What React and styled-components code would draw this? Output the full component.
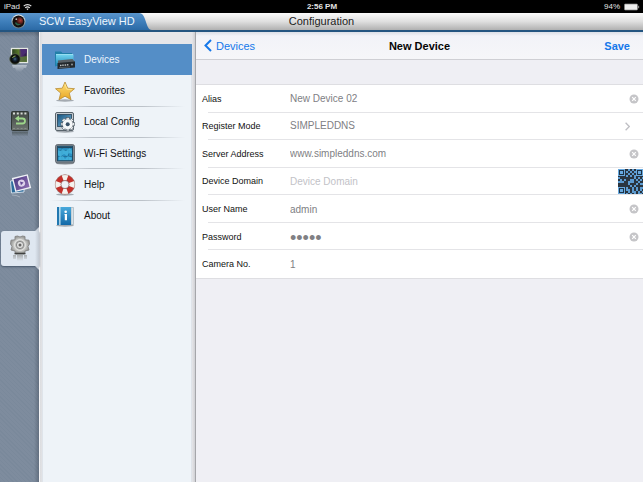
import React, { useState } from "react";
import styled, { createGlobalStyle, css } from "styled-components";

const GlobalStyle = createGlobalStyle`
  * { box-sizing: border-box; }
  body { margin: 0; }
  body, button, input { font-family: "Liberation Sans", Arial, sans-serif; }
  button { border: 0; padding: 0; background: none; color: inherit; cursor: pointer; }
  svg { display: block; flex: none; }
`;

const Screen = styled.div`
  display: flex;
  flex-direction: column;
  min-height: 100vh;
  background: #efeff4;
`;

const StatusBar = styled.div`
  display: grid;
  grid-template-columns: 1fr auto 1fr;
  align-items: center;
  height: 13px;
  padding: 0 3px 0 4px;
  background: #000;
  color: #e4e4e4;
  font-size: 8px;
  line-height: 12px;
`;

const StatusGroup = styled.div`
  display: flex;
  align-items: center;
  gap: 3px;
  justify-content: ${(p) => (p.$end ? "flex-end" : "flex-start")};
`;

const Clock = styled.time`
  font-weight: bold;
`;

const Header = styled.header`
  display: grid;
  grid-template-columns: 152px 1fr;
  height: 19px;
  border-bottom: 2px solid #245580;
  background: linear-gradient(#fbfbfb, #dfdfdf 50%, #b0b0b0);
  position: relative;
`;

const Brand = styled.div`
  display: flex;
  align-items: center;
  gap: 13px;
  padding: 0 0 0 11px;
  color: #eef6fd;
  font-size: 11px;
  line-height: 17px;
  white-space: nowrap;
  background: linear-gradient(#5994cb, #3f7fbb 50%, #2b6aa6);
  clip-path: path("M0 0 H139 C147 0 145 17 152 17 V19 H0 Z");
`;

const ScreenTitle = styled.div`
  position: absolute;
  inset: 0;
  text-align: center;
  font-size: 11px;
  line-height: 17px;
  color: #222;
`;

const Body = styled.div`
  display: flex;
  flex: 1;
`;

const Rail = styled.nav`
  display: flex;
  flex-direction: column;
  gap: 28px;
  width: 39px;
  flex: none;
  padding: 10px 0 0 1px;
  background:
    linear-gradient(90deg, transparent 34px, rgba(50, 60, 75, 0.35)),
    linear-gradient(rgba(40, 50, 65, 0.3), transparent 5px),
    repeating-linear-gradient(45deg, #7a899b 0 1px, #7e8c9e 1px 3px);
`;

const RailButton = styled.button`
  display: flex;
  align-items: center;
  justify-content: center;
  height: 35px;
  position: relative;
  ${(p) =>
    p.$active &&
    css`
      border-radius: 3px 0 0 3px;
      background: linear-gradient(90deg, #dfe7f1 34px, #c3cad4);
      box-shadow: 0 1px 2px #46566b;
      &::before,
      &::after {
        content: "";
        position: absolute;
        right: 0;
        width: 4px;
        height: 4px;
        background: #c9d0da;
      }
      &::before { top: -4px; clip-path: polygon(100% 0, 100% 100%, 0 100%); }
      &::after { bottom: -4px; clip-path: polygon(0 0, 100% 0, 100% 100%); }
    `}
`;

const Sidebar = styled.aside`
  width: 157px;
  flex: none;
  display: flex;
  padding: 12px 3px 0 2px;
  border-left: 1px solid #f5f5f7;
  border-right: 1px solid #a5a6aa;
  background: linear-gradient(90deg, #dbdcdf, #e6e6e9 3px, #e6e6e9 152px, #cfd0d4);
`;

const MenuPane = styled.nav`
  flex: 1;
  border: 1px solid #dfe4ea;
  border-width: 0 1px;
  background: #eef3f8;
`;

const Menu = styled.ul`
  display: grid;
  grid-auto-rows: 1fr;
  min-height: 188px;
  margin: 0 -1px;
  padding: 0;
  list-style: none;
`;

const MenuItem = styled.li`
  display: flex;
  background: linear-gradient(90deg, transparent 8px, #bcc2c9 50px, #bcc2c9 100px, transparent 143px) bottom / 100% 1px no-repeat;
  &:last-child { background: none; }
`;

const MenuButton = styled.button`
  display: flex;
  align-items: center;
  gap: 8px;
  width: 100%;
  min-height: 31px;
  padding: 0 12px;
  text-align: left;
  font-size: 10px;
  line-height: 12px;
  color: ${(p) => (p.$active ? "#eff6fd" : "#101214")};
  background: ${(p) => (p.$active ? "#548ec7" : "transparent")};
`;

const Panel = styled.main`
  flex: 1;
  min-width: 0;
`;

const NavBar = styled.div`
  display: grid;
  grid-template-columns: 1fr auto 1fr;
  align-items: center;
  height: 28px;
  border-bottom: 1px solid #cfcfd4;
  background: linear-gradient(#dcdfe6, #f2f3f8 4px, #f6f6f9);
`;

const PanelTitle = styled.h1`
  margin: 0;
  font-size: 11px;
  line-height: 14px;
  color: #050505;
`;

const NavButton = styled.button`
  display: flex;
  align-items: center;
  gap: 4px;
  padding: 0 13px 0 8px;
  justify-self: ${(p) => (p.$end ? "end" : "start")};
  font-size: 11px;
  line-height: 14px;
  font-weight: ${(p) => (p.$end ? "bold" : "normal")};
  color: #1578ea;
`;

const Form = styled.form`
  display: grid;
  grid-auto-rows: 1fr;
  min-height: 195px;
  margin-top: 24px;
  border: 1px solid #dedee2;
  border-width: 1px 0;
  background: #fff;
`;

const Row = styled.div`
  display: flex;
  align-items: center;
  padding: 0 4px 0 6px;
  background: linear-gradient(#e4e4e7, #e4e4e7) 12px bottom / 100% 1px no-repeat;
  ${(p) => p.$flush && css`padding-right: 0;`}
  &:last-child { background: none; }
`;

const Label = styled.label`
  width: 88px;
  flex: none;
  font-size: 9px;
  line-height: 12px;
  color: #111;
`;

const fieldText = css`
  flex: 1;
  min-width: 0;
  padding: 0;
  border: 0;
  outline: 0;
  background: none;
  color: #808084;
  font-size: 10px;
  line-height: 14px;
  height: 20px;
`;

const Field = styled.input`
  ${fieldText}
  &::placeholder { color: #c2c2c7; opacity: 1; }
  &[type="password"] { height: 24px; padding-top: 3px; font-size: 18px; }
`;

const PickerButton = styled.button`
  ${fieldText}
  display: flex;
  align-items: center;
  justify-content: space-between;
  padding-right: 9px;
`;

const IconButton = styled.button`
  display: block;
  flex: none;
`;

const WifiIcon = () => (
  <svg width="9" height="8" viewBox="0 0 9 8" fill="none" stroke="#e4e4e4" strokeWidth="1.2">
    <path d="M.7 3.1a5.5 5.5 0 0 1 7.6 0M2.2 4.9a3.3 3.3 0 0 1 4.6 0" />
    <path d="M3.3 5.8 4.5 7.2 5.7 5.8Q4.5 5 3.3 5.8Z" fill="#e4e4e4" stroke="none" />
  </svg>
);

const BatteryIcon = () => (
  <svg width="17" height="8" viewBox="0 0 17 8">
    <rect x="1.5" y="1" width="13" height="6" rx=".7" fill="#eee" stroke="#888" strokeWidth=".7" />
    <path d="M15.4 2.7h.7v2.6h-.7z" fill="#ddd" />
  </svg>
);

const LensIcon = () => (
  <svg width="15" height="15" viewBox="0 0 15 15">
    <defs>
      <linearGradient id="lensRim" x2="0" y2="1"><stop stopColor="#eef1f3" /><stop offset="1" stopColor="#657580" /></linearGradient>
      <radialGradient id="lensRed" cx=".7" cy=".4"><stop stopColor="#b33c33" /><stop offset="1" stopColor="#190c0c" /></radialGradient>
    </defs>
    <circle cx="7.5" cy="7.5" r="7" fill="url(#lensRim)" />
    <circle cx="7.5" cy="7.5" r="6" fill="#111" />
    <circle cx="7.6" cy="7.4" r="4.6" fill="url(#lensRed)" />
    <path d="M4 9c1 3 4 3 6 1C8 10 6 10 5 8z" fill="#28624b" />
    <circle cx="5.3" cy="5.2" r=".9" fill="#dce8e5" opacity=".8" />
  </svg>
);

const LiveIcon = () => (
  <svg width="22" height="28" viewBox="0 0 22 28">
    <defs>
      <linearGradient id="liveArt"><stop stopColor="#273b1f" /><stop offset=".45" stopColor="#5a7a2b" /><stop offset=".6" stopColor="#50316e" /><stop offset="1" stopColor="#251541" /></linearGradient>
      <radialGradient id="liveLens"><stop stopColor="#4b6a89" /><stop offset=".5" stopColor="#142536" /><stop offset="1" stopColor="#08090b" /></radialGradient>
      <linearGradient id="liveFade" x2="0" y2="1"><stop stopColor="#dfe5eb" stopOpacity=".6" /><stop offset="1" stopColor="#dfe5eb" stopOpacity="0" /></linearGradient>
    </defs>
    <rect x="2.5" y="2.5" width="16" height="14" fill="url(#liveArt)" stroke="#e5e9e2" strokeWidth="1.3" />
    <path d="M11 3.2l3 6 4-3v-3z" fill="#4a2b72" />
    <path d="M11 11l7-1v6h-7z" fill="#5f8a2c" opacity=".7" />
    <circle cx="6" cy="13" r="5.3" fill="#10120f" stroke="#56634d" strokeWidth=".7" />
    <circle cx="6" cy="13" r="3.5" fill="url(#liveLens)" />
    <path d="M3.5 12a3 3 0 0 1 3-2" stroke="#94b653" fill="none" />
    <path d="M3 19h15l-1 3H4zM6 22h9l-3 4H8z" fill="url(#liveFade)" />
  </svg>
);

const PlaybackIcon = () => (
  <svg width="20" height="28" viewBox="0 0 20 28">
    <defs>
      <linearGradient id="filmBg" x2="0" y2="1"><stop stopColor="#404743" /><stop offset="1" stopColor="#6d7470" /></linearGradient>
      <linearGradient id="filmFade" x2="0" y2="1"><stop stopColor="#39423f" stopOpacity=".6" /><stop offset="1" stopColor="#39423f" stopOpacity="0" /></linearGradient>
    </defs>
    <rect x="1.5" y="2.5" width="17" height="19" rx="1" fill="url(#filmBg)" stroke="#303735" />
    <path d="M3 4.5h14" stroke="#d5dad5" strokeWidth="2" strokeDasharray="2 1.8" />
    <path d="M3 19.5h14" stroke="#858c87" strokeWidth="1.2" strokeDasharray="2 1.8" />
    <path d="M7 9.5h5.5a2.5 2.5 0 0 1 0 5H6" stroke="#9dd68a" strokeWidth="1.8" fill="none" />
    <path d="m5 9.5 4-3v6z" fill="#9dd68a" />
    <path d="M2 22.5h16v5H2z" fill="url(#filmFade)" />
  </svg>
);

const MediaIcon = () => (
  <svg width="24" height="24" viewBox="0 0 24 24">
    <defs><linearGradient id="mediaArt" x2="1" y2="1"><stop stopColor="#473780" /><stop offset="1" stopColor="#9271b4" /></linearGradient></defs>
    <path d="M2.5 7 16 5v13L3.500 19z" fill="#2c6b9b" stroke="#cedce8" />
    <g transform="rotate(-14 14 9)">
      <rect x="6" y="2.5" width="15" height="13" fill="url(#mediaArt)" stroke="#eef0f5" strokeWidth="1.4" />
      <circle cx="13.500" cy="9" r="3.600" fill="#dcd1ea" />
      <path d="m12.400 7 3.200 2-3.200 2z" fill="#654a96" />
    </g>
    <path d="M4 21q4 0 8 2" stroke="#c4ccd4" fill="none" opacity=".5" />
  </svg>
);

const SettingsIcon = () => (
  <svg width="24" height="32" viewBox="0 0 24 32">
    <defs>
      <radialGradient id="gearMetal"><stop stopColor="#777" /><stop offset=".55" stopColor="#d8d8d6" /><stop offset="1" stopColor="#929391" /></radialGradient>
      <linearGradient id="gearFade" x2="0" y2="1"><stop stopColor="#888" stopOpacity=".6" /><stop offset="1" stopColor="#888" stopOpacity="0" /></linearGradient>
    </defs>
    <path d="M7 3.5 9.500 3l2.500 1 2.500-1L17 3.500v3.300l4 .4L21.500 11 20 13.500 21 17l-4 1-.5 3h-9L7 18l-4-1 1-3.500L2.500 11 3 7.200l4-.4z" fill="url(#gearMetal)" stroke="#858585" strokeWidth=".9" />
    <circle cx="12" cy="12" r="5.3" fill="#b5b6b5" stroke="#ededeb" strokeWidth=".8" />
    <circle cx="12" cy="12" r="3.6" fill="#e0e0df" stroke="#777" strokeWidth=".8" />
    <circle cx="12" cy="12" r="1.5" fill="#666" />
    <path d="M6.500 20.500h11" stroke="#3f4040" strokeWidth="1.500" />
    <path d="M5 22h3v4H5zM9 22h6v6H9zM16 22h3v4h-3z" fill="url(#gearFade)" />
  </svg>
);

const Shadow = () => <ellipse cx="11" cy="20.5" rx="9" ry="1.2" fill="#5a6169" opacity=".5" />;

const DevicesIcon = () => (
  <svg width="22" height="22" viewBox="0 0 22 22">
    <defs><linearGradient id="folder" x2="0" y2="1"><stop stopColor="#72d4ef" /><stop offset="1" stopColor="#1c84b4" /></linearGradient></defs>
    <path d="M1 18V2.500h6L8.500 4H18v8H5z" fill="#2180a9" />
    <path d="M2 17V5.500h17.500V13L7 17z" fill="url(#folder)" />
    <path d="M2 5.500h17" stroke="#a8ebfa" strokeWidth=".8" />
    <path d="M4 11.500 18.500 10l2.500 3-17 1.500z" fill="#596066" />
    <path d="M3.500 14 21 12.500v6L3.500 20z" fill="#24282c" />
    <path d="M6 16.500 15 15.700" stroke="#c1c6c8" strokeWidth="1.400" strokeDasharray="1.500 .8" />
    <circle cx="18" cy="15.500" r="1" fill="#8e9497" />
    <path d="M5 18.700 16 17.900" stroke="#778087" strokeWidth=".6" />
  </svg>
);

const FavoritesIcon = () => (
  <svg width="22" height="22" viewBox="0 0 22 22">
    <defs><linearGradient id="star" x2="0" y2="1"><stop stopColor="#ffe27b" /><stop offset="1" stopColor="#e8a522" /></linearGradient></defs>
    <Shadow />
    <path d="m11 2 2.700 6.200 6.800.5-5.200 4.400 1.700 6.600L11 16.200 5 19.700l1.700-6.600L1.500 8.700l6.800-.5z" fill="url(#star)" stroke="#b88b32" strokeWidth=".8" strokeLinejoin="round" />
    <path d="m11 4 1.800 5.200 5.200.4" stroke="#fff0ae" strokeWidth=".6" fill="none" />
  </svg>
);

const gearTeeth = [0, 45, 90, 135, 180, 225, 270, 315];

const LocalConfigIcon = () => (
  <svg width="22" height="22" viewBox="0 0 22 22">
    <defs><linearGradient id="monitor" x2="1" y2="1"><stop stopColor="#17547f" /><stop offset="1" stopColor="#7bb8db" /></linearGradient></defs>
    <Shadow />
    <rect x="1.5" y="1.5" width="18" height="18" rx="1.5" fill="#c5ccd2" stroke="#59646c" />
    <rect x="3.5" y="3.500" width="14" height="12" fill="url(#monitor)" stroke="#284358" strokeWidth=".8" />
    <g fill="#f5f7f8" stroke="#3f4c57" strokeWidth=".6">
      {gearTeeth.map((a) => <rect key={a} x="12.100" y="6.500" width="3.200" height="4" transform={`rotate(${a} 13.700 13.200)`} />)}
      <circle cx="13.700" cy="13.200" r="5" />
    </g>
    <circle cx="13.700" cy="13.200" r="5" fill="#f5f7f8" />
    <circle cx="13.700" cy="13.200" r="2" fill="#3a5166" />
  </svg>
);

const WifiSettingsIcon = () => (
  <svg width="22" height="22" viewBox="0 0 22 22">
    <Shadow />
    <rect x="1.700" y="1.700" width="18.600" height="18.300" rx="1.500" fill="#899199" stroke="#555d64" />
    <rect x="3.500" y="3.300" width="15" height="14.500" fill="#298fc2" stroke="#214a63" />
    <path d="M4 7.500h14M4 13.500h14M8 3.500v14M14.500 3.500v14" stroke="#1c5f87" strokeWidth=".6" />
    <path d="m4 7 3 1 1-2 4 2 3-3 3 2v4l-3-1-2 3-3-2-4 3-2-2zM5 14l4-1 2 3 3-3 4 2-1 2H5z" fill="#48b8e0" opacity=".75" />
    <path d="M4 4.500h14" stroke="#1f4a64" strokeWidth="1.200" />
  </svg>
);

const HelpIcon = () => (
  <svg width="22" height="22" viewBox="0 0 22 22">
    <Shadow />
    <circle cx="11" cy="10.500" r="7" fill="none" stroke="#8c2624" strokeWidth="6" />
    <circle cx="11" cy="10.500" r="7" fill="none" stroke="#c4302b" strokeWidth="5" />
    <circle cx="11" cy="10.500" r="7" fill="none" stroke="#f4f1ed" strokeWidth="5.600" pathLength="80" strokeDasharray="9 11" strokeDashoffset="4.500" />
    <circle cx="11" cy="10.500" r="9.800" fill="none" stroke="#b9a19b" strokeWidth=".5" />
    <circle cx="11" cy="10.500" r="4" fill="none" stroke="#87514e" strokeWidth=".5" />
  </svg>
);

const AboutIcon = () => (
  <svg width="22" height="22" viewBox="0 0 22 22">
    <defs><linearGradient id="book" x2="0" y2="1"><stop stopColor="#48a9dc" /><stop offset="1" stopColor="#1268a7" /></linearGradient></defs>
    <Shadow />
    <path d="M17 2.500h2.500v17H17z" fill="#d9e3e9" stroke="#98a7b1" strokeWidth=".6" />
    <path d="M3 2h14v18H3z" fill="url(#book)" />
    <path d="M3 2h2v18H3z" fill="#2077b0" />
    <path d="M5.200 2h1.300v18H5.200z" fill="#cce8f4" />
    <circle cx="11.700" cy="6.800" r="1.300" fill="#fff" />
    <path d="M10.500 9H13v6.300h-2.200V10h-.3z" fill="#fff" />
  </svg>
);

const BackIcon = () => (
  <svg width="8" height="13" viewBox="0 0 8 13" fill="none" stroke="#1578ea" strokeWidth="2">
    <path d="M7 1 1.500 6.500 7 12" />
  </svg>
);

const DisclosureIcon = () => (
  <svg width="5" height="9" viewBox="0 0 5 9" fill="none" stroke="#bfbfc4" strokeWidth="1.300">
    <path d="m.6.700 3.700 3.800L.6 8.300" />
  </svg>
);

const ClearIcon = () => (
  <svg width="10" height="10" viewBox="0 0 10 10">
    <circle cx="5" cy="5" r="4.500" fill="#c5c5c8" />
    <path d="m3.200 3.200 3.600 3.600m0-3.600L3.200 6.800" stroke="#fff" strokeWidth="1.200" />
  </svg>
);

const qrModules = [
  ".....#.#.....",
  "....#.#.#....",
  ".....#.#.....",
  "....#.#.#....",
  "#.......#.#.#",
  ".#.#..##.#.#.",
  "###..###..#..",
  ".....#...#.##",
  "......#.#....",
  "....#..#.#.##",
  "....##.#.#.#.",
  ".....#.##.#.#",
  "....#.#.#.##.",
];

const Finder = ({ x, y }) => (
  <g>
    <rect x={x} y={y} width="7" height="7" fill="#68a9df" />
    <rect x={x + 1} y={y + 1} width="5" height="5" fill="#1d3347" />
    <rect x={x + 2} y={y + 2} width="3" height="3" fill="#68a9df" />
  </g>
);

const QrIcon = () => (
  <svg width="25" height="25" viewBox="0 0 25 25">
    <rect width="25" height="25" fill="#2a3540" />
    {qrModules.map((line, y) =>
      [...line].map((c, x) => c === "#" && <rect key={`${x}-${y}`} x={x * 2} y={y * 2} width="2" height="2" fill="#5c9bd1" />)
    )}
    <Finder x={0} y={0} />
    <Finder x={18} y={0} />
    <Finder x={0} y={18} />
  </svg>
);

const railItems = [
  ["Live view", LiveIcon],
  ["Playback", PlaybackIcon],
  ["Media", MediaIcon],
  ["Configuration", SettingsIcon],
];

const menuItems = [
  ["Devices", DevicesIcon],
  ["Favorites", FavoritesIcon],
  ["Local Config", LocalConfigIcon],
  ["Wi-Fi Settings", WifiSettingsIcon],
  ["Help", HelpIcon],
  ["About", AboutIcon],
];

const fields = [
  { id: "alias", label: "Alias", clear: true },
  { id: "mode", label: "Register Mode", picker: true },
  { id: "server", label: "Server Address", clear: true },
  { id: "domain", label: "Device Domain", placeholder: "Device Domain", qr: true },
  { id: "user", label: "User Name", clear: true },
  { id: "password", label: "Password", type: "password", clear: true },
  { id: "camera", label: "Camera No." },
];

export default function App() {
  const [section, setSection] = useState("Devices");
  const [values, setValues] = useState({
    alias: "New Device 02",
    mode: "SIMPLEDDNS",
    server: "www.simpleddns.com",
    domain: "",
    user: "admin",
    password: "12345",
    camera: "1",
  });
  const setValue = (id, value) => setValues((v) => ({ ...v, [id]: value }));

  return (
    <Screen>
      <GlobalStyle />
      <StatusBar>
        <StatusGroup>iPad <WifiIcon /></StatusGroup>
        <Clock>2:56 PM</Clock>
        <StatusGroup $end>94% <BatteryIcon /></StatusGroup>
      </StatusBar>
      <Header>
        <ScreenTitle>Configuration</ScreenTitle>
        <Brand><LensIcon />SCW EasyView HD</Brand>
      </Header>
      <Body>
        <Rail>
          {railItems.map(([name, Icon]) => (
            <RailButton key={name} type="button" aria-label={name} $active={name === "Configuration"}><Icon /></RailButton>
          ))}
        </Rail>
        <Sidebar>
          <MenuPane>
            <Menu>
              {menuItems.map(([name, Icon]) => (
                <MenuItem key={name}>
                  <MenuButton type="button" $active={name === section} onClick={() => setSection(name)}>
                    <Icon />{name}
                  </MenuButton>
                </MenuItem>
              ))}
            </Menu>
          </MenuPane>
        </Sidebar>
        <Panel>
          <NavBar>
            <NavButton type="button"><BackIcon />Devices</NavButton>
            <PanelTitle>New Device</PanelTitle>
            <NavButton type="submit" form="device" $end>Save</NavButton>
          </NavBar>
          <Form id="device" onSubmit={(e) => e.preventDefault()}>
            {fields.map((f) => (
              <Row key={f.id} $flush={f.qr}>
                <Label htmlFor={f.id}>{f.label}</Label>
                {f.picker ? (
                  <PickerButton id={f.id} type="button">{values[f.id]}<DisclosureIcon /></PickerButton>
                ) : (
                  <Field
                    id={f.id}
                    type={f.type || "text"}
                    placeholder={f.placeholder}
                    value={values[f.id]}
                    onChange={(e) => setValue(f.id, e.target.value)}
                  />
                )}
                {f.clear && (
                  <IconButton type="button" aria-label={`Clear ${f.label}`} onClick={() => setValue(f.id, "")}><ClearIcon /></IconButton>
                )}
                {f.qr && <IconButton type="button" aria-label="Scan code"><QrIcon /></IconButton>}
              </Row>
            ))}
          </Form>
        </Panel>
      </Body>
    </Screen>
  );
}
